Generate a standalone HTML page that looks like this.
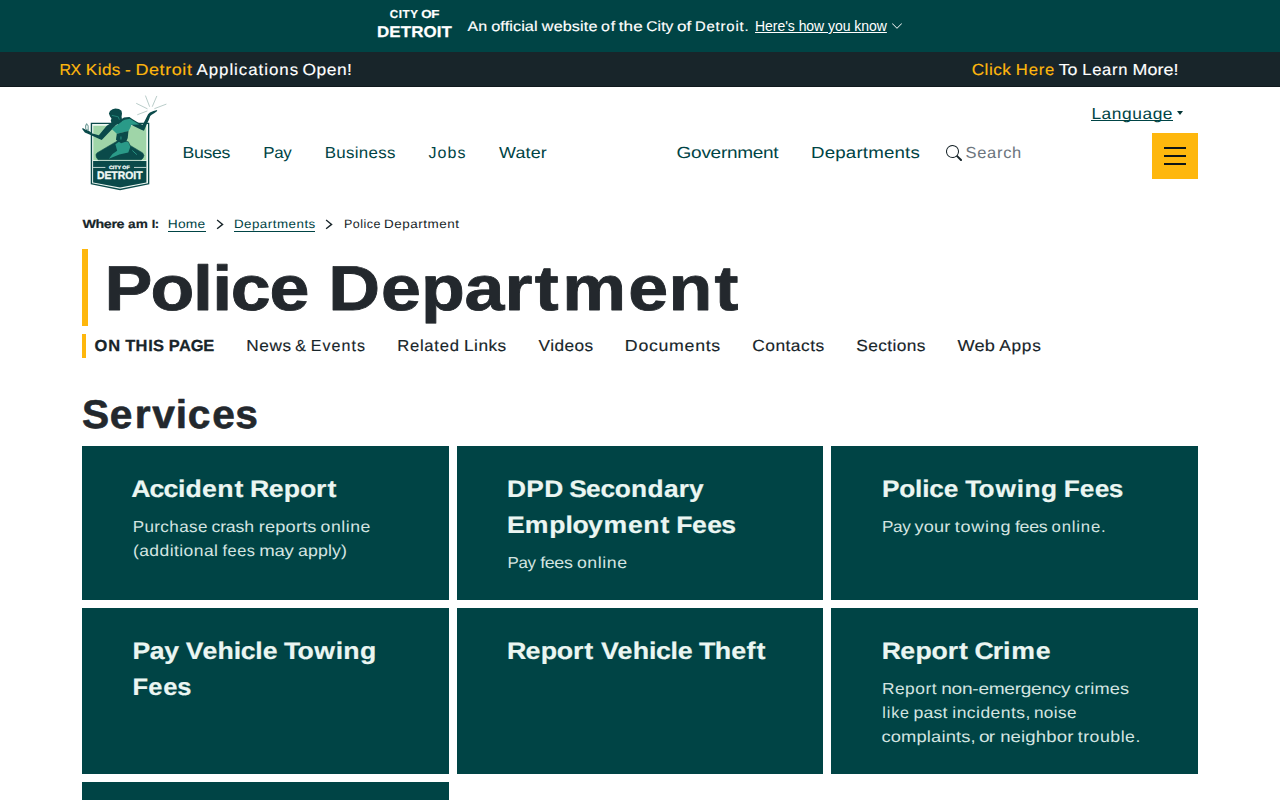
<!DOCTYPE html>
<html lang="en">
<head>
<meta charset="utf-8">
<title>Police Department | City of Detroit</title>
<style>
html,body{margin:0;padding:0;background:#fff}
body{width:1280px;height:800px;overflow:hidden;position:relative;font-family:"Liberation Sans", sans-serif;-webkit-font-smoothing:antialiased;text-rendering:geometricPrecision}
.r{position:absolute;display:block}
.t{position:absolute;display:block;margin:0;padding:0;white-space:nowrap;text-decoration:none}
.w{display:inline-block;white-space:nowrap;transform-origin:0 50%}
.g{position:absolute;left:0;top:0;overflow:visible;font-family:"Liberation Sans",sans-serif;text-rendering:geometricPrecision;white-space:pre}
</style>
</head>
<body>
<header>
<section aria-label="Official government website">
<div class="r" id="govbar" style="left:0;top:0;width:1280px;height:52px;background:#004445">
</div>
<span id="w1" class="t" style="left:389px;top:8px;font-size:11.6px;line-height:14px;height:14px;font-weight:700;color:#fff;width:51px;"><span class="w" id="w1_0" style="position:absolute;top:0;left:0;letter-spacing:0.629px;transform:translateX(0.75px) scaleX(1.0000);-webkit-text-stroke:0.19px #fff;">CITY</span> <span class="w" id="w1_1" style="position:absolute;top:0;left:0;letter-spacing:-0.341px;transform:translateX(32.15px) scaleX(1.1520);-webkit-text-stroke:0.19px #fff;">OF</span></span>
<span id="w2" class="t" style="left:377px;top:24px;font-size:15.6px;line-height:18px;height:18px;font-weight:700;color:#fff;width:76px;"><span class="w" id="w2_0" style="position:absolute;top:0;left:0;letter-spacing:0.098px;transform:translateX(0.01px) scaleX(1.0853);-webkit-text-stroke:0.25px #fff;">DETROIT</span></span>
<span id="gov" class="t" style="left:467px;top:16px;font-size:14px;line-height:21px;height:21px;font-weight:400;color:#fff;width:282px;"><span class="w" id="gov_0" style="position:absolute;top:0;left:0;letter-spacing:0.022px;transform:translateX(0.50px) scaleX(1.1385);-webkit-text-stroke:0.15px #fff;">An</span> <span class="w" id="gov_1" style="position:absolute;top:0;left:0;letter-spacing:0.058px;transform:translateX(24.19px) scaleX(1.1658);-webkit-text-stroke:0.15px #fff;">official</span> <span class="w" id="gov_2" style="position:absolute;top:0;left:0;letter-spacing:0.116px;transform:translateX(74.85px) scaleX(1.1532);-webkit-text-stroke:0.15px #fff;">website</span> <span class="w" id="gov_3" style="position:absolute;top:0;left:0;letter-spacing:0.683px;transform:translateX(134.11px) scaleX(1.1333);-webkit-text-stroke:0.15px #fff;">of</span> <span class="w" id="gov_4" style="position:absolute;top:0;left:0;letter-spacing:0.092px;transform:translateX(151.71px) scaleX(1.2160);-webkit-text-stroke:0.15px #fff;">the</span> <span class="w" id="gov_5" style="position:absolute;top:0;left:0;letter-spacing:0.083px;transform:translateX(179.33px) scaleX(1.1053);-webkit-text-stroke:0.15px #fff;">City</span> <span class="w" id="gov_6" style="position:absolute;top:0;left:0;letter-spacing:0.041px;transform:translateX(210.00px) scaleX(1.2200);-webkit-text-stroke:0.15px #fff;">of</span> <span class="w" id="gov_7" style="position:absolute;top:0;left:0;letter-spacing:0.802px;transform:translateX(227.92px) scaleX(1.0593);-webkit-text-stroke:0.15px #fff;">Detroit.</span></span>
<a id="how" class="t" href="#" style="left:755px;top:16px;font-size:14px;line-height:21px;height:21px;font-weight:400;color:#fff;font-family:'Liberation Sans',sans-serif;text-rendering:auto;letter-spacing:-0.04px;text-decoration:underline;"><span class="w" id="how_0" style="display:inline;">Here's how you know</span></a>
<svg class="r nm" style="left:891.2px;top:20.2px" width="12" height="12" viewBox="0 0 16 16"><path fill="#fff" fill-rule="evenodd" d="M1.646 4.646a.5.5 0 0 1 .708 0L8 10.293l5.646-5.647a.5.5 0 0 1 .708.708l-6 6a.5.5 0 0 1-.708 0l-6-6a.5.5 0 0 1 0-.708"/></svg>
</section>
<section aria-label="Site alert">
<div class="r " style="left:0px;top:52px;width:1280px;height:35px;background:#18252a;"></div>
<div class="r " style="left:0px;top:86px;width:1280px;height:1px;background:#10191d;"></div>
<a id="al1" class="t" href="#" style="left:59px;top:59px;font-size:16px;line-height:24px;height:24px;font-weight:400;color:#feb70d;width:134px;"><span class="w" id="al1_0" style="position:absolute;top:0;left:0;letter-spacing:-0.402px;transform:translateX(0.50px) scaleX(0.9963);-webkit-text-stroke:0.15px #feb70d;">RX</span> <span class="w" id="al1_1" style="position:absolute;top:0;left:0;letter-spacing:0.365px;transform:translateX(26.85px) scaleX(1.0718);-webkit-text-stroke:0.15px #feb70d;">Kids</span> <span class="w" id="al1_2" style="position:absolute;top:0;left:0;transform:translateX(65.91px) scaleX(1.0717);-webkit-text-stroke:0.15px #feb70d;">-</span> <span class="w" id="al1_3" style="position:absolute;top:0;left:0;letter-spacing:0.550px;transform:translateX(76.41px) scaleX(1.1207);-webkit-text-stroke:0.15px #feb70d;">Detroit</span></a>
<span id="al2" class="t" style="left:196px;top:59px;font-size:16px;line-height:24px;height:24px;font-weight:400;color:#fff;width:156px;"><span class="w" id="al2_0" style="position:absolute;top:0;left:0;letter-spacing:0.921px;transform:translateX(0.50px) scaleX(1.0534);-webkit-text-stroke:0.15px #fff;">Applications</span> <span class="w" id="al2_1" style="position:absolute;top:0;left:0;letter-spacing:0.500px;transform:translateX(106.39px) scaleX(1.0867);-webkit-text-stroke:0.15px #fff;">Open!</span></span>
<a id="al3" class="t" href="#" style="left:971px;top:59px;font-size:16px;line-height:24px;height:24px;font-weight:400;color:#feb70d;width:84px;"><span class="w" id="al3_0" style="position:absolute;top:0;left:0;letter-spacing:0.417px;transform:translateX(0.69px) scaleX(1.0794);-webkit-text-stroke:0.15px #feb70d;">Click</span> <span class="w" id="al3_1" style="position:absolute;top:0;left:0;letter-spacing:0.828px;transform:translateX(44.80px) scaleX(1.0366);-webkit-text-stroke:0.15px #feb70d;">Here</span></a>
<span id="al4" class="t" style="left:1059px;top:59px;font-size:16px;line-height:24px;height:24px;font-weight:400;color:#fff;width:119px;"><span class="w" id="al4_0" style="position:absolute;top:0;left:0;letter-spacing:-0.022px;transform:translateX(-0.28px) scaleX(1.1125);-webkit-text-stroke:0.15px #fff;">To</span> <span class="w" id="al4_1" style="position:absolute;top:0;left:0;letter-spacing:0.666px;transform:translateX(23.32px) scaleX(1.0329);-webkit-text-stroke:0.15px #fff;">Learn</span> <span class="w" id="al4_2" style="position:absolute;top:0;left:0;letter-spacing:0.062px;transform:translateX(73.55px) scaleX(1.1176);-webkit-text-stroke:0.15px #fff;">More!</span></span>
</section>
<nav aria-label="Main navigation">
<svg class="r nm" id="logo" role="img" aria-label="City of Detroit" style="left:76px;top:92px" width="96" height="102" viewBox="0 0 96 102">
<path d="M69.56,3.95 L73.52,14.38 M80.70,4.31 L76.39,14.38 M60.58,11.50 L71.14,16.68 M90.05,12.22 L78.76,16.53 M61.66,22.64 L71.00,19.05" stroke="#8aa9a5" stroke-width="0.6" fill="none" stroke-linecap="round"/>
<path d="M14.75,30.80 L73.30,30.80 L73.30,92.30 L44.05,98.20 L14.75,92.30Z" fill="#0a4a4a"/>
<path d="M16.10,32.10 L72.00,32.10 L72.00,91.25 L44.05,96.85 L16.10,91.25Z" fill="#eef8f2"/>
<path d="M17.30,33.70 L70.30,33.70 L70.30,68.20 L17.30,68.20Z" fill="#9fd5a8"/>
<path d="M17.10,68.90 L70.40,68.90 L70.40,90.40 L44.05,95.50 L17.10,90.40Z" fill="#0a4a4a"/>
<path d="M17.10,75.45 L29.40,75.45 M58.00,75.45 L70.40,75.45" stroke="#eef8f2" stroke-width="0.8"/>
<path d="M19.97,62.73 L21.05,60.94 L30.75,55.19 L39.38,50.16 L42.25,48.00 L52.31,49.80 L54.11,53.39 L66.69,60.94 L67.98,63.45 L67.05,65.97 L65.25,67.77 L22.13,67.77 L20.33,65.25Z" fill="#0a4a4a" stroke="#0a4a4a" stroke-width="0.6" stroke-linejoin="round"/>
<path d="M39.38,52.31 L45.13,48.36 L52.31,50.16 L54.33,54.83 L52.31,60.58 L43.33,62.38 L32.91,66.83 L36.50,62.02 L41.17,58.78Z" fill="#2a9a88"/>
<path d="M56.63,58.78 L60.58,62.38" stroke="#2a9a88" stroke-width="0.9" fill="none" stroke-linecap="round"/>
<path d="M44.41,27.67 L48.00,25.52 L53.39,25.01 L56.63,27.31 L64.53,31.98 L66.69,32.70 L69.20,28.03 L72.08,22.28 L73.88,20.48 L77.47,19.05 L81.21,17.97 L80.92,19.26 L78.19,21.20 L75.67,22.64 L74.23,24.08 L72.80,28.03 L71.00,31.63 L67.98,38.81 L65.25,37.73 L55.55,33.06 L52.31,33.78 L46.56,31.63Z" fill="#0a4a4a"/>
<path d="M35.78,30.55 L42.61,30.91 L39.38,33.78 L35.78,37.38 L25.72,48.01 L22.84,46.86 L13.50,42.55 L8.83,40.61 L6.17,37.02 L6.74,35.94 L9.19,37.52 L12.78,38.81 L16.38,41.54 L22.84,43.13 L30.75,33.78Z" fill="#0a4a4a"/>
<path d="M9.19,37.38 L9.04,33.42 L10.63,30.91 L12.64,33.78 L12.78,38.81Z" fill="#6f9a97"/>
<path d="M10.05,36.66 L10.05,33.78 L10.98,32.70 L11.70,34.14 L11.78,37.38Z" fill="#e4f0ec"/>
<path d="M35.78,37.02 L45.13,29.61 L48.72,27.67 L53.89,26.74 L63.09,32.49 L55.55,32.85 L54.11,35.94 L52.46,39.17 L40.81,41.83Z" fill="#2a9a88"/>
<path d="M40.81,41.69 L52.46,39.03 L51.74,46.00 L50.30,49.59 L45.13,51.18 L39.95,47.80Z" fill="#0a4a4a"/>
<path d="M35.21,28.75 L45.13,27.17 L45.99,29.61 L42.25,32.20 L35.49,31.77Z" fill="#0a4a4a"/>
<path d="M44.05,46.00 L45.84,46.00 M44.91,44.20 L44.91,47.80" stroke="#2a9a88" stroke-width="0.6" fill="none"/>
<path d="M32.91,21.56 L33.98,19.05 L36.50,17.25 L39.38,16.39 L42.97,17.11 L45.48,18.83 L45.99,21.56 L45.56,24.80 L45.99,27.31 L44.05,30.19 L36.50,31.05 L34.70,28.75 L35.49,26.59 L34.06,24.44Z" fill="#0a4a4a"/>
<path d="M35.78,23.36 L42.25,24.80 M42.25,24.80 L43.33,27.67" stroke="#2a9a88" stroke-width="0.7" fill="none"/>
<text x="43.30" y="77.20" text-anchor="middle" textLength="20.6" lengthAdjust="spacingAndGlyphs" style="font-family:'Liberation Sans',sans-serif;font-weight:700;fill:#f2faf6;font-size:4.7px;stroke:#f2faf6;stroke-width:0.3px">CITY OF</text>
<text x="43.75" y="87.25" text-anchor="middle" textLength="45.6" lengthAdjust="spacingAndGlyphs" style="font-family:'Liberation Sans',sans-serif;font-weight:700;fill:#f2faf6;font-size:10.9px;stroke:#f2faf6;stroke-width:0.35px">DETROIT</text>
</svg>
<a id="n0" class="t" href="#" style="left:182px;top:142px;font-size:16px;line-height:24px;height:24px;font-weight:400;color:#004445;width:49px;"><span class="w" id="n0_0" style="position:absolute;top:0;left:0;letter-spacing:-0.339px;transform:translateX(0.62px) scaleX(1.1053);">Buses</span></a>
<a id="n1" class="t" href="#" style="left:262px;top:142px;font-size:16px;line-height:24px;height:24px;font-weight:400;color:#004445;width:31px;"><span class="w" id="n1_0" style="position:absolute;top:0;left:0;letter-spacing:-0.236px;transform:translateX(1.18px) scaleX(1.0571);">Pay</span></a>
<a id="n2" class="t" href="#" style="left:324px;top:142px;font-size:16px;line-height:24px;height:24px;font-weight:400;color:#004445;width:72px;"><span class="w" id="n2_0" style="position:absolute;top:0;left:0;letter-spacing:0.312px;transform:translateX(0.68px) scaleX(1.0545);">Business</span></a>
<a id="n3" class="t" href="#" style="left:428px;top:142px;font-size:16px;line-height:24px;height:24px;font-weight:400;color:#004445;width:38px;"><span class="w" id="n3_0" style="position:absolute;top:0;left:0;letter-spacing:1.083px;transform:translateX(0.50px) scaleX(1.0000);">Jobs</span></a>
<a id="n4" class="t" href="#" style="left:498px;top:142px;font-size:16px;line-height:24px;height:24px;font-weight:400;color:#004445;width:50px;"><span class="w" id="n4_0" style="position:absolute;top:0;left:0;letter-spacing:0.173px;transform:translateX(1.00px) scaleX(1.1179);">Water</span></a>
<a id="n5" class="t" href="#" style="left:676px;top:141px;font-size:16.15px;line-height:24px;height:24px;font-weight:400;color:#004445;width:104px;"><span class="w" id="n5_0" style="position:absolute;top:0;left:0;letter-spacing:-0.245px;transform:translateX(0.62px) scaleX(1.1773);">Government</span></a>
<a id="n6" class="t" href="#" style="left:810px;top:141px;font-size:16.1px;line-height:24px;height:24px;font-weight:400;color:#004445;width:110px;"><span class="w" id="n6_0" style="position:absolute;top:0;left:0;letter-spacing:0.140px;transform:translateX(1.05px) scaleX(1.1620);">Departments</span></a>
<svg class="r nm" style="left:946px;top:145px" width="16" height="16" viewBox="0 0 16 16"><path fill="#18252a" d="M11.742 10.344a6.5 6.5 0 1 0-1.397 1.398h-.001q.044.06.098.115l3.85 3.85a1 1 0 0 0 1.415-1.414l-3.85-3.85a1 1 0 0 0-.115-.1zM12 6.5a5.500 5.500 0 1 1-11 0 5.500 5.500 0 0 1 11 0"/></svg>
<span id="srch" class="t" style="left:965px;top:142px;font-size:16px;line-height:24px;height:24px;font-weight:400;color:#6c757d;width:57px;"><span class="w" id="srch_0" style="position:absolute;top:0;left:0;letter-spacing:0.679px;transform:translateX(0.53px) scaleX(1.0306);">Search</span></span>
<a id="lang" class="t" href="#" style="left:1091px;top:103px;font-size:16px;line-height:24px;height:24px;font-weight:400;color:#004445;width:82px;"><span class="w" id="lang_0" style="position:absolute;top:0;left:0;letter-spacing:0.514px;transform:translateX(0.39px) scaleX(1.0845);">Language</span></a>
<div class="r nm" style="left:1091.2px;top:120px;width:81.8px;height:1px;background:#004445;"></div>
<div class="r nm" style="left:1177px;top:110.9px;width:0;height:0;border-left:3.9px solid transparent;border-right:3.9px solid transparent;border-top:4.1px solid #063637"></div>
<button type="button" class="r nm" aria-label="Menu" style="left:1152px;top:133px;width:46px;height:46px;background:#feb70d;border:0;padding:0;margin:0;border-radius:0"><span class="r" style="left:12px;top:14px;width:22px;height:2px;background:#0d1417"></span><span class="r" style="left:12px;top:22px;width:22px;height:2px;background:#0d1417"></span><span class="r" style="left:12px;top:30px;width:22px;height:2px;background:#0d1417"></span></button>
</nav>
</header>
<main>
<nav aria-label="Breadcrumb">
<span id="b0" class="t" style="left:82px;top:215px;font-size:12px;line-height:19px;height:19px;font-weight:700;color:#18252a;width:77px;"><span class="w" id="b0_0" style="position:absolute;top:0;left:0;letter-spacing:-0.337px;transform:translateX(0.47px) scaleX(1.1903);-webkit-text-stroke:0.19px #18252a;">Where</span> <span class="w" id="b0_1" style="position:absolute;top:0;left:0;letter-spacing:0.220px;transform:translateX(46.00px) scaleX(1.1364);-webkit-text-stroke:0.19px #18252a;">am</span> <span class="w" id="b0_2" style="position:absolute;top:0;left:0;letter-spacing:-0.328px;transform:translateX(69.64px) scaleX(1.0682);-webkit-text-stroke:0.19px #18252a;">I:</span></span>
<a id="b1" class="t bl" href="#" style="left:167px;top:215px;font-size:12px;line-height:19px;height:19px;font-weight:400;color:#004445;width:39px;"><span class="w" id="b1_0" style="position:absolute;top:0;left:0;letter-spacing:0.145px;transform:translateX(0.85px) scaleX(1.1475);">Home</span></a>
<a id="b2" class="t bl" href="#" style="left:233px;top:215px;font-size:12.06px;line-height:19px;height:19px;font-weight:400;color:#004445;width:83px;"><span class="w" id="b2_0" style="position:absolute;top:0;left:0;letter-spacing:0.442px;transform:translateX(0.89px) scaleX(1.1089);">Departments</span></a>
<span id="b3" class="t" style="left:343px;top:215px;font-size:12.1px;line-height:19px;height:19px;font-weight:400;color:#18252a;width:117px;"><span class="w" id="b3_0" style="position:absolute;top:0;left:0;letter-spacing:0.474px;transform:translateX(0.97px) scaleX(1.0333);">Police</span> <span class="w" id="b3_1" style="position:absolute;top:0;left:0;letter-spacing:0.469px;transform:translateX(40.98px) scaleX(1.1133);">Department</span></span>
<svg class="r nm" style="left:214.7px;top:218px" width="10" height="13" viewBox="0 0 10 13"><path d="M2.1 2 L7.6 6.4 L2.1 10.8" fill="none" stroke="#18252a" stroke-width="1.35"/></svg>
<svg class="r nm" style="left:324.3px;top:218px" width="10" height="13" viewBox="0 0 10 13"><path d="M2.1 2 L7.6 6.4 L2.1 10.8" fill="none" stroke="#18252a" stroke-width="1.35"/></svg>
<div class="r nm" style="left:168.3px;top:231px;width:37.4px;height:1px;background:#004445;"></div>
<div class="r nm" style="left:234.3px;top:231px;width:81.2px;height:1px;background:#004445;"></div>
</nav>
<section aria-label="Page title">
<div class="r " style="left:82px;top:249px;width:6px;height:77px;background:#feb70d;"></div>
<h1 id="h1" class="t" style="left:104px;top:250px;font-size:63.3px;line-height:77px;height:77px;font-weight:700;color:#23282d;width:638px;"><svg class="g" width="638" height="77" viewBox="0 0 638 77"><text transform="scale(1.1341,1)" x="0.45 41.05 78.56 95.55 111.71 146.00 180.61 197.85 244.22 279.50 317.85 353.13 379.77 404.16 462.21 497.78 538.35" y="59.5" style="font-size:63.3px;font-weight:700;fill:#23282d;stroke:#23282d;stroke-width:0.8px;stroke-linejoin:round;">Police Department</text></svg></h1>
<div class="r " style="left:82px;top:334px;width:4px;height:24px;background:#feb70d;"></div>
<span id="otp" class="t" style="left:94px;top:335px;font-size:16px;line-height:24px;height:24px;font-weight:700;color:#18252a;width:123px;"><svg class="g" width="123" height="24" viewBox="0 0 123 24"><text transform="scale(1.0285,1)" x="0.59 13.88 25.92 30.27 40.47 52.87 57.27 67.55 72.58 82.77 94.20 106.30" y="16" style="font-size:16px;font-weight:700;fill:#18252a;stroke:#18252a;stroke-width:0.26px;stroke-linejoin:round;">ON THIS PAGE</text></svg></span>
<a id="o0" class="t" href="#" style="left:245px;top:335px;font-size:16px;line-height:24px;height:24px;font-weight:400;color:#18252a;width:121px;"><span class="w" id="o0_0" style="position:absolute;top:0;left:0;letter-spacing:0.589px;transform:translateX(1.16px) scaleX(1.0745);-webkit-text-stroke:0.15px #18252a;">News</span> <span class="w" id="o0_1" style="position:absolute;top:0;left:0;transform:translateX(50.22px) scaleX(1.0000);-webkit-text-stroke:0.15px #18252a;">&amp;</span> <span class="w" id="o0_2" style="position:absolute;top:0;left:0;letter-spacing:1.050px;transform:translateX(65.84px) scaleX(1.0000);-webkit-text-stroke:0.15px #18252a;">Events</span></a>
<a id="o1" class="t" href="#" style="left:396px;top:335px;font-size:16px;line-height:24px;height:24px;font-weight:400;color:#18252a;width:111px;"><span class="w" id="o1_0" style="position:absolute;top:0;left:0;letter-spacing:0.731px;transform:translateX(1.20px) scaleX(1.0368);-webkit-text-stroke:0.15px #18252a;">Related</span> <span class="w" id="o1_1" style="position:absolute;top:0;left:0;letter-spacing:0.440px;transform:translateX(68.02px) scaleX(1.0797);-webkit-text-stroke:0.15px #18252a;">Links</span></a>
<a id="o2" class="t" href="#" style="left:538px;top:335px;font-size:16px;line-height:24px;height:24px;font-weight:400;color:#18252a;width:56px;"><span class="w" id="o2_0" style="position:absolute;top:0;left:0;letter-spacing:0.422px;transform:translateX(0.50px) scaleX(1.0781);-webkit-text-stroke:0.15px #18252a;">Videos</span></a>
<a id="o3" class="t" href="#" style="left:624px;top:335px;font-size:16px;line-height:24px;height:24px;font-weight:400;color:#18252a;width:97px;"><span class="w" id="o3_0" style="position:absolute;top:0;left:0;letter-spacing:0.643px;transform:translateX(0.87px) scaleX(1.1079);-webkit-text-stroke:0.15px #18252a;">Documents</span></a>
<a id="o4" class="t" href="#" style="left:752px;top:335px;font-size:16px;line-height:24px;height:24px;font-weight:400;color:#18252a;width:73px;"><span class="w" id="o4_0" style="position:absolute;top:0;left:0;letter-spacing:0.443px;transform:translateX(0.18px) scaleX(1.0874);-webkit-text-stroke:0.15px #18252a;">Contacts</span></a>
<a id="o5" class="t" href="#" style="left:856px;top:335px;font-size:16px;line-height:24px;height:24px;font-weight:400;color:#18252a;width:70px;"><span class="w" id="o5_0" style="position:absolute;top:0;left:0;letter-spacing:0.376px;transform:translateX(0.17px) scaleX(1.0825);-webkit-text-stroke:0.15px #18252a;">Sections</span></a>
<a id="o6" class="t" href="#" style="left:957px;top:335px;font-size:16px;line-height:24px;height:24px;font-weight:400;color:#18252a;width:85px;"><span class="w" id="o6_0" style="position:absolute;top:0;left:0;letter-spacing:0.210px;transform:translateX(0.50px) scaleX(1.1336);-webkit-text-stroke:0.15px #18252a;">Web</span> <span class="w" id="o6_1" style="position:absolute;top:0;left:0;letter-spacing:0.615px;transform:translateX(42.31px) scaleX(1.0833);-webkit-text-stroke:0.15px #18252a;">Apps</span></a>
</section>
<section aria-label="Services">
<h2 id="h2" class="t" style="left:82px;top:391px;font-size:40px;line-height:48px;height:48px;font-weight:700;color:#23282d;width:177px;"><svg class="g" width="177" height="48" viewBox="0 0 177 48"><text transform="scale(1.0174,1)" x="0.09 27.24 51.76 68.94 92.18 104.01 127.91 150.75" y="37.0" style="font-size:40px;font-weight:700;fill:#23282d;stroke:#23282d;stroke-width:0.6px;stroke-linejoin:round;">Services</text></svg></h2>
<article>
<div class="r " style="left:82px;top:446px;width:367px;height:154px;background:#004445;"></div>
<a id="c0t0" class="t" href="#" style="left:132px;top:472px;font-size:24px;line-height:36px;height:36px;font-weight:700;color:#ebf6f2;width:208px;"><svg class="g" width="208" height="36" viewBox="0 0 208 36"><text transform="scale(1.1115,1)" x="-0.72 15.79 28.44 41.36 48.09 63.03 76.65 92.15 100.56 106.23 122.97 136.58 151.10 165.64 175.83" y="25" style="font-size:24px;font-weight:700;fill:#ebf6f2;stroke:#ebf6f2;stroke-width:0.2px;stroke-linejoin:round;">Accident Report</text></svg></a>
<span id="c0d0" class="t" style="left:132px;top:516px;font-size:16px;line-height:24px;height:24px;font-weight:400;color:#d4e4e1;width:239px;"><span class="w" id="c0d0_0" style="position:absolute;top:0;left:0;letter-spacing:0.376px;transform:translateX(0.67px) scaleX(1.0639);">Purchase</span> <span class="w" id="c0d0_1" style="position:absolute;top:0;left:0;letter-spacing:-0.147px;transform:translateX(79.48px) scaleX(1.1040);">crash</span> <span class="w" id="c0d0_2" style="position:absolute;top:0;left:0;letter-spacing:0.143px;transform:translateX(126.77px) scaleX(1.1392);">reports</span> <span class="w" id="c0d0_3" style="position:absolute;top:0;left:0;letter-spacing:0.509px;transform:translateX(188.57px) scaleX(1.1012);">online</span></span>
<span id="c0d1" class="t" style="left:132px;top:540px;font-size:16px;line-height:24px;height:24px;font-weight:400;color:#d4e4e1;width:215px;"><span class="w" id="c0d1_0" style="position:absolute;top:0;left:0;letter-spacing:0.403px;transform:translateX(0.91px) scaleX(1.0920);">(additional</span> <span class="w" id="c0d1_1" style="position:absolute;top:0;left:0;letter-spacing:0.513px;transform:translateX(90.52px) scaleX(1.0229);">fees</span> <span class="w" id="c0d1_2" style="position:absolute;top:0;left:0;letter-spacing:-0.344px;transform:translateX(127.31px) scaleX(1.1641);">may</span> <span class="w" id="c0d1_3" style="position:absolute;top:0;left:0;letter-spacing:0.090px;transform:translateX(166.11px) scaleX(1.1071);">apply)</span></span>
</article>
<article>
<div class="r " style="left:457px;top:446px;width:366px;height:154px;background:#004445;"></div>
<a id="c1t0" class="t" href="#" style="left:506px;top:472px;font-size:24px;line-height:36px;height:36px;font-weight:700;color:#ebf6f2;width:200px;"><svg class="g" width="200" height="36" viewBox="0 0 200 36"><text transform="scale(1.0956,1)" x="0.94 18.56 34.85 52.34 57.75 72.99 86.30 99.21 114.00 129.19 144.18 157.66 166.93" y="25" style="font-size:24px;font-weight:700;fill:#ebf6f2;stroke:#ebf6f2;stroke-width:0.2px;stroke-linejoin:round;">DPD Secondary</text></svg></a>
<span id="c1t1" class="t" style="left:506px;top:508px;font-size:24px;line-height:36px;height:36px;font-weight:700;color:#ebf6f2;width:230px;"><svg class="g" width="230" height="36" viewBox="0 0 230 36"><text transform="scale(1.1083,1)" x="0.95 16.89 39.06 53.79 59.99 74.05 87.92 110.16 123.81 139.34 147.77 153.62 167.88 181.54 194.12" y="25" style="font-size:24px;font-weight:700;fill:#ebf6f2;stroke:#ebf6f2;stroke-width:0.2px;stroke-linejoin:round;">Employment Fees</text></svg></span>
<span id="c1d0" class="t" style="left:506px;top:552px;font-size:16px;line-height:24px;height:24px;font-weight:400;color:#d4e4e1;width:122px;"><span class="w" id="c1d0_0" style="position:absolute;top:0;left:0;letter-spacing:-0.236px;transform:translateX(1.43px) scaleX(1.0571);">Pay</span> <span class="w" id="c1d0_1" style="position:absolute;top:0;left:0;letter-spacing:-0.337px;transform:translateX(34.25px) scaleX(1.1144);">fees</span> <span class="w" id="c1d0_2" style="position:absolute;top:0;left:0;letter-spacing:0.525px;transform:translateX(70.93px) scaleX(1.1048);">online</span></span>
</article>
<article>
<div class="r " style="left:831px;top:446px;width:367px;height:154px;background:#004445;"></div>
<a id="c2t0" class="t" href="#" style="left:881px;top:472px;font-size:24px;line-height:36px;height:36px;font-weight:700;color:#ebf6f2;width:243px;"><svg class="g" width="243" height="36" viewBox="0 0 243 36"><text transform="scale(1.0923,1)" x="0.86 16.65 31.14 37.75 44.14 57.49 70.88 77.07 89.39 104.73 124.32 131.27 146.59 161.41 167.39 181.85 195.72 208.48" y="25" style="font-size:24px;font-weight:700;fill:#ebf6f2;stroke:#ebf6f2;stroke-width:0.2px;stroke-linejoin:round;">Police Towing Fees</text></svg></a>
<span id="c2d0" class="t" style="left:881px;top:516px;font-size:16px;line-height:24px;height:24px;font-weight:400;color:#d4e4e1;width:225px;"><span class="w" id="c2d0_0" style="position:absolute;top:0;left:0;letter-spacing:-0.292px;transform:translateX(0.91px) scaleX(1.0714);">Pay</span> <span class="w" id="c2d0_1" style="position:absolute;top:0;left:0;letter-spacing:0.133px;transform:translateX(33.53px) scaleX(1.1306);">your</span> <span class="w" id="c2d0_2" style="position:absolute;top:0;left:0;letter-spacing:0.635px;transform:translateX(73.84px) scaleX(1.1267);">towing</span> <span class="w" id="c2d0_3" style="position:absolute;top:0;left:0;letter-spacing:-0.337px;transform:translateX(134.04px) scaleX(1.1144);">fees</span> <span class="w" id="c2d0_4" style="position:absolute;top:0;left:0;letter-spacing:0.790px;transform:translateX(170.53px) scaleX(1.0448);">online.</span></span>
</article>
<article>
<div class="r " style="left:82px;top:608px;width:367px;height:166px;background:#004445;"></div>
<a id="c3t0" class="t" href="#" style="left:132px;top:634px;font-size:24px;line-height:36px;height:36px;font-weight:700;color:#ebf6f2;width:247px;"><svg class="g" width="247" height="36" viewBox="0 0 247 36"><text transform="scale(1.1091,1)" x="0.39 16.05 29.09 41.97 48.50 63.47 77.12 91.85 98.12 111.08 117.82 131.07 137.11 149.23 164.30 183.70 190.47 205.56" y="25" style="font-size:24px;font-weight:700;fill:#ebf6f2;stroke:#ebf6f2;stroke-width:0.2px;stroke-linejoin:round;">Pay Vehicle Towing</text></svg></a>
<span id="c3t1" class="t" style="left:132px;top:670px;font-size:24px;line-height:36px;height:36px;font-weight:700;color:#ebf6f2;width:61px;"><svg class="g" width="61" height="36" viewBox="0 0 61 36"><text transform="scale(1.0611,1)" x="0.40 15.26 29.54 42.68" y="25" style="font-size:24px;font-weight:700;fill:#ebf6f2;stroke:#ebf6f2;stroke-width:0.2px;stroke-linejoin:round;">Fees</text></svg></span>
</article>
<article>
<div class="r " style="left:457px;top:608px;width:366px;height:166px;background:#004445;"></div>
<a id="c4t0" class="t" href="#" style="left:506px;top:634px;font-size:24px;line-height:36px;height:36px;font-weight:700;color:#ebf6f2;width:262px;"><svg class="g" width="262" height="36" viewBox="0 0 262 36"><text transform="scale(1.1186,1)" x="0.89 17.53 31.05 45.48 59.96 70.07 78.45 84.90 99.74 113.27 127.91 134.10 146.97 153.63 166.79 172.47 186.55 201.42 215.02 223.85" y="25" style="font-size:24px;font-weight:700;fill:#ebf6f2;stroke:#ebf6f2;stroke-width:0.2px;stroke-linejoin:round;">Report Vehicle Theft</text></svg></a>
</article>
<article>
<div class="r " style="left:831px;top:608px;width:367px;height:166px;background:#004445;"></div>
<a id="c5t0" class="t" href="#" style="left:881px;top:634px;font-size:24px;line-height:36px;height:36px;font-weight:700;color:#ebf6f2;width:171px;"><svg class="g" width="171" height="36" viewBox="0 0 171 36"><text transform="scale(1.1111,1)" x="0.64 17.39 31.01 45.53 60.09 70.27 78.70 84.25 100.68 109.88 117.16 139.35" y="25" style="font-size:24px;font-weight:700;fill:#ebf6f2;stroke:#ebf6f2;stroke-width:0.2px;stroke-linejoin:round;">Report Crime</text></svg></a>
<span id="c5d0" class="t" style="left:881px;top:678px;font-size:16px;line-height:24px;height:24px;font-weight:400;color:#d4e4e1;width:249px;"><span class="w" id="c5d0_0" style="position:absolute;top:0;left:0;letter-spacing:0.480px;transform:translateX(0.90px) scaleX(1.0834);">Report</span> <span class="w" id="c5d0_1" style="position:absolute;top:0;left:0;letter-spacing:-0.232px;transform:translateX(60.28px) scaleX(1.1932);">non-emergency</span> <span class="w" id="c5d0_2" style="position:absolute;top:0;left:0;letter-spacing:0.123px;transform:translateX(193.77px) scaleX(1.1370);">crimes</span></span>
<span id="c5d1" class="t" style="left:881px;top:702px;font-size:16px;line-height:24px;height:24px;font-weight:400;color:#d4e4e1;width:196px;"><span class="w" id="c5d1_0" style="position:absolute;top:0;left:0;letter-spacing:0.917px;transform:translateX(1.25px) scaleX(1.0000);">like</span> <span class="w" id="c5d1_1" style="position:absolute;top:0;left:0;letter-spacing:0.105px;transform:translateX(32.61px) scaleX(1.1077);">past</span> <span class="w" id="c5d1_2" style="position:absolute;top:0;left:0;letter-spacing:0.430px;transform:translateX(71.32px) scaleX(1.0920);">incidents,</span> <span class="w" id="c5d1_3" style="position:absolute;top:0;left:0;letter-spacing:0.397px;transform:translateX(152.90px) scaleX(1.0699);">noise</span></span>
<span id="c5d2" class="t" style="left:881px;top:726px;font-size:16px;line-height:24px;height:24px;font-weight:400;color:#d4e4e1;width:259px;"><span class="w" id="c5d2_0" style="position:absolute;top:0;left:0;letter-spacing:0.131px;transform:translateX(0.45px) scaleX(1.1453);">complaints,</span> <span class="w" id="c5d2_1" style="position:absolute;top:0;left:0;letter-spacing:-0.733px;transform:translateX(98.01px) scaleX(1.1944);">or</span> <span class="w" id="c5d2_2" style="position:absolute;top:0;left:0;letter-spacing:0.133px;transform:translateX(119.16px) scaleX(1.1580);">neighbor</span> <span class="w" id="c5d2_3" style="position:absolute;top:0;left:0;letter-spacing:0.466px;transform:translateX(196.78px) scaleX(1.1043);">trouble.</span></span>
</article>
<article>
<div class="r " style="left:82px;top:782px;width:367px;height:18px;background:#004445;"></div>
</article>
</section>
</main>
</body>
</html>
